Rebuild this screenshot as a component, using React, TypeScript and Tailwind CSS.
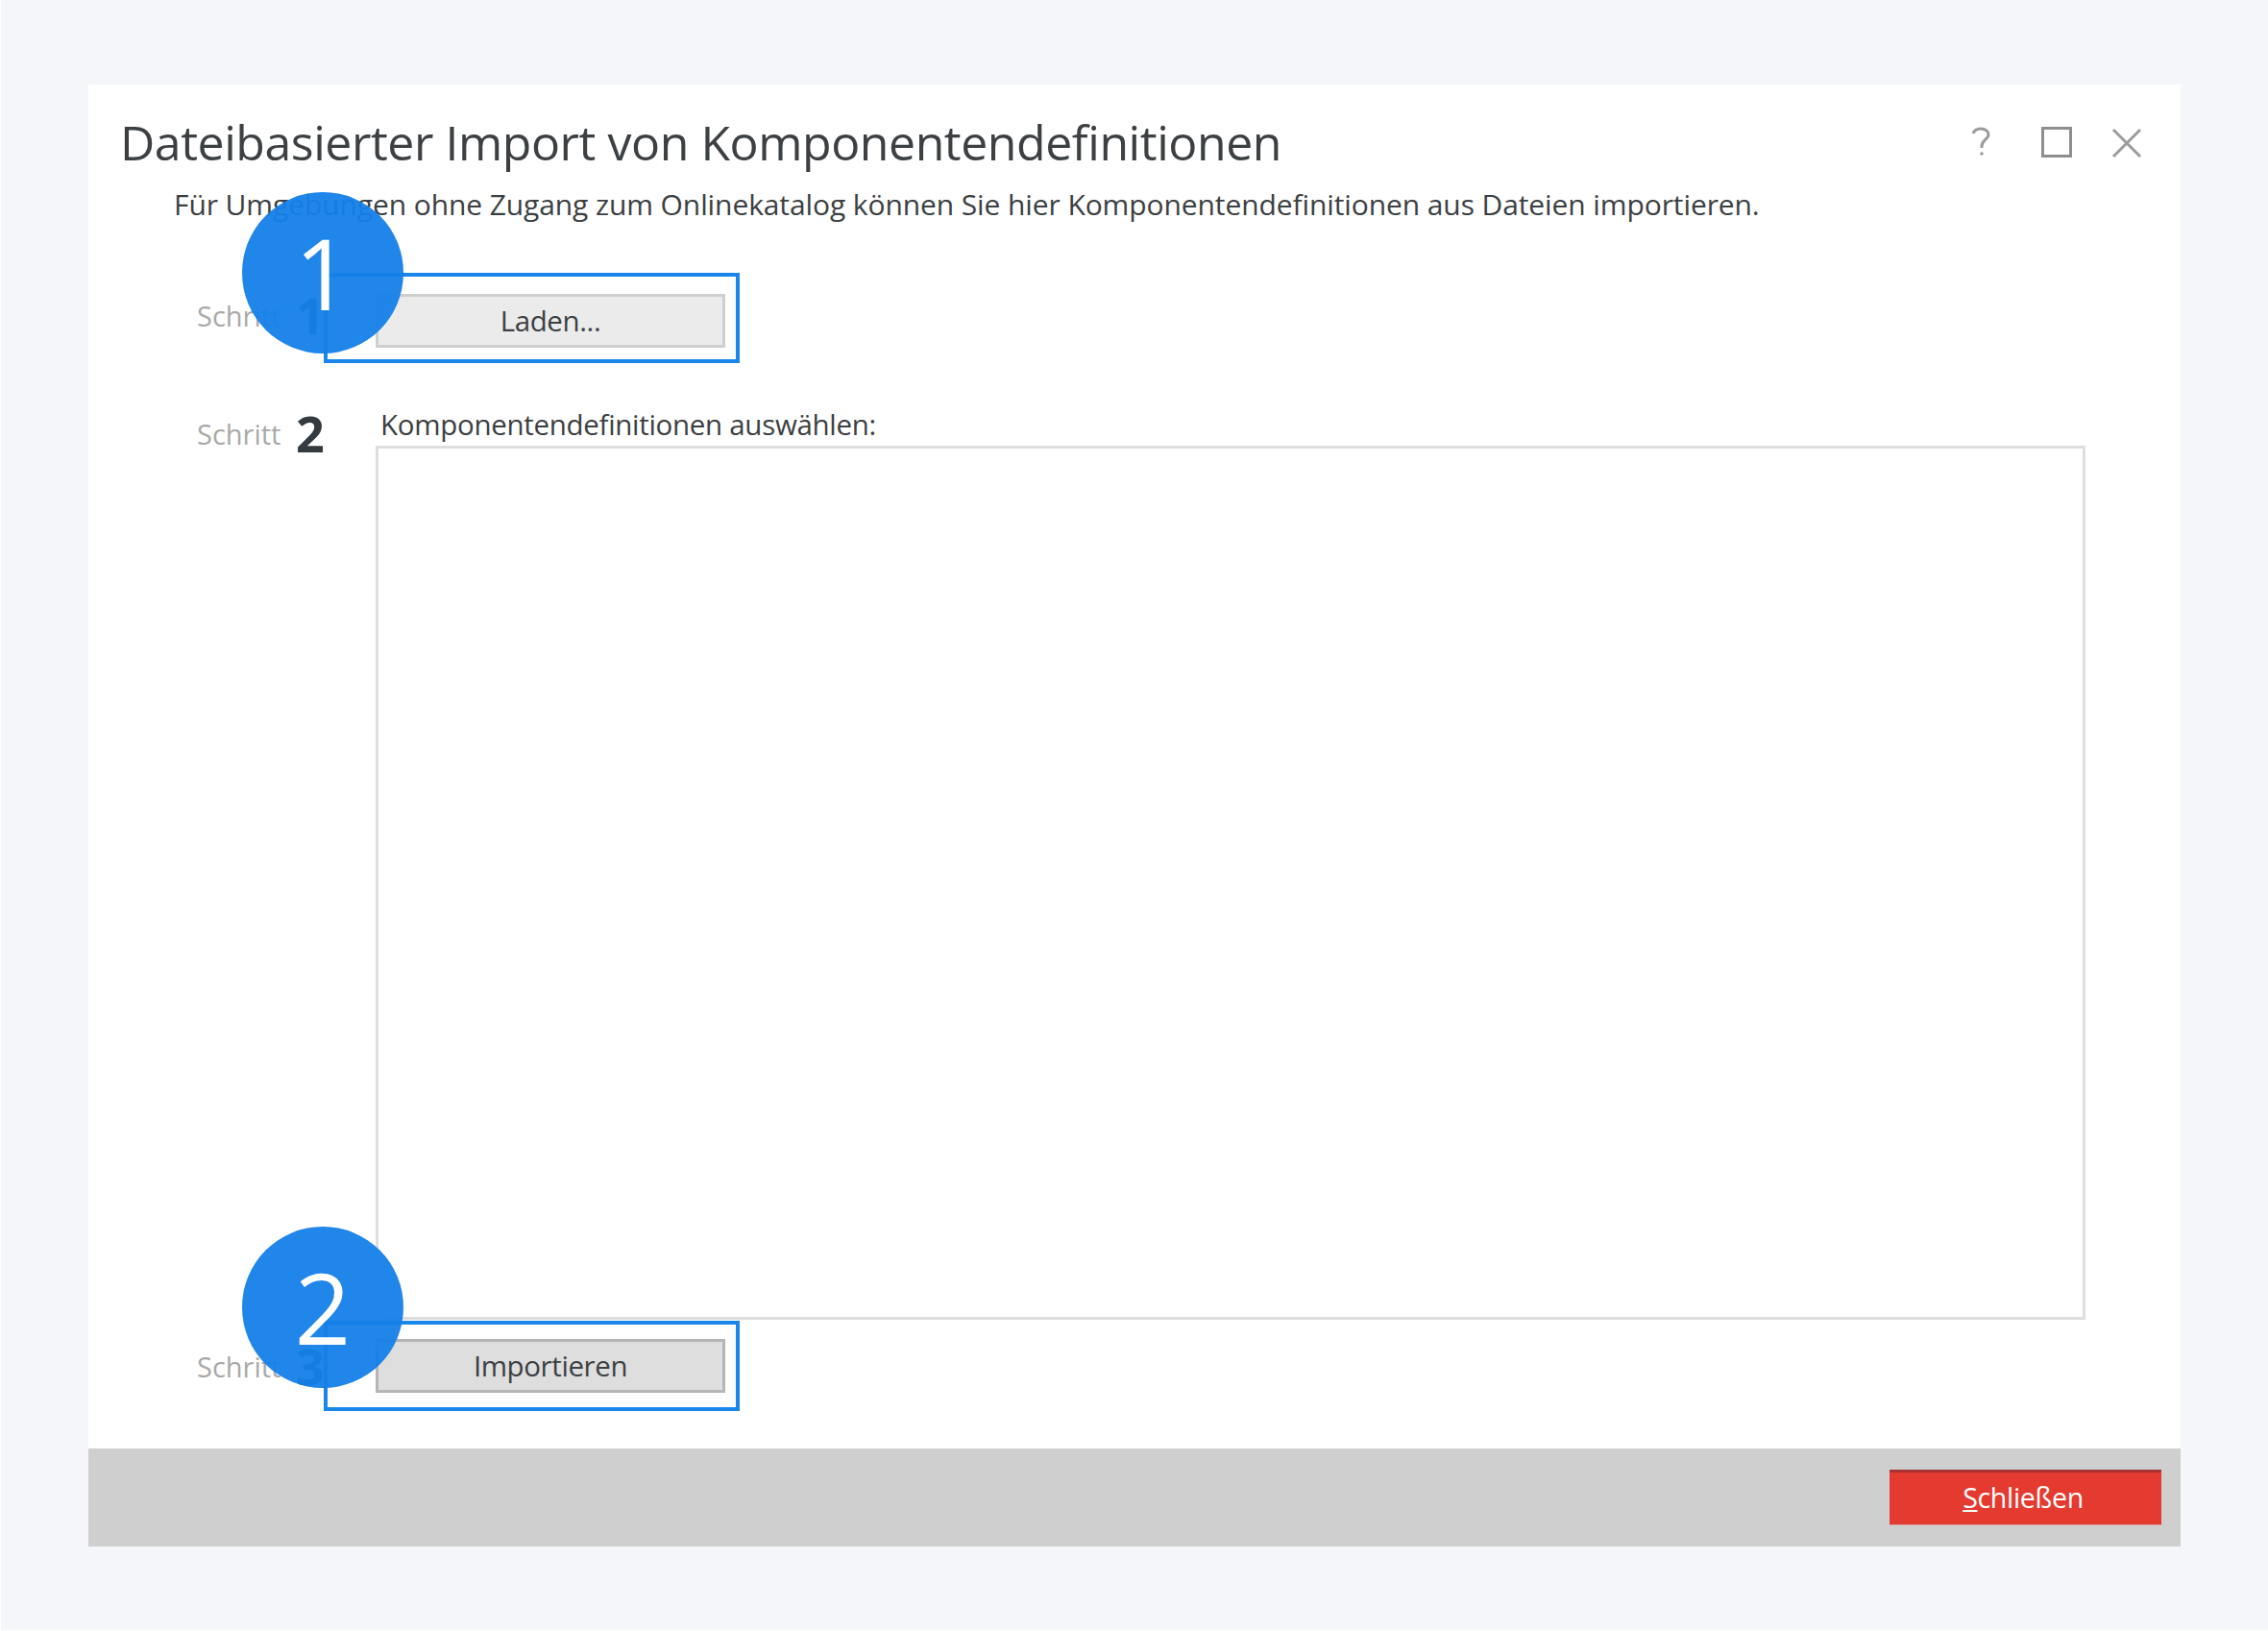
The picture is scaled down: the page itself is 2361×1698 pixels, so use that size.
const FONT = "font-['Open_Sans','Noto_Sans',sans-serif]";

type StepLabelProps = {
  step: number;
  className?: string;
};

// "Schritt n" label in the left column
const StepLabel = ({ step, className = "" }: StepLabelProps) => (
  <div className={`w-[299px] shrink-0 pl-[113px] flex items-center ${className}`}>
    <span className="text-[29px] leading-none text-[#a9a9a9] w-[103px] shrink-0">Schritt</span>
    <span className="text-[52px] leading-none font-bold text-[#333a40]">{step}</span>
  </div>
);

type CalloutProps = {
  n: number;
  frameTop: string;
  circleTop: string;
};

// Blue frame + numbered circle lying over a button
const Callout = ({ n, frameTop, circleTop }: CalloutProps) => (
  <>
    <div className={`absolute left-[-54px] w-[433px] h-[94px] border-4 border-[#1b86ea] pointer-events-none ${frameTop}`} />
    <div className={`absolute left-[-139px] w-[168px] h-[168px] rounded-full bg-[#1480e9]/95 flex items-center justify-center text-white text-[102px] leading-none pointer-events-none ${circleTop}`}>
      {n}
    </div>
  </>
);

export default function App() {
  return (
    <div className={`w-[2361px] h-[1698px] bg-[#f4f6fa] border-l border-b border-white pl-[91px] pt-[88px] overflow-hidden ${FONT}`}>
      <div className="w-[2178px] h-[1522px] bg-white flex flex-col">
        <div className="h-[1420px] relative">
          {/* Header */}
          <div className="h-[88px] pt-[32px] pl-[33px] pr-[40px] flex justify-between items-start">
            <h1 className="text-[50px] leading-[56px] text-[#3c4043] tracking-[-0.45px] font-normal">
              Dateibasierter Import von Komponentendefinitionen
            </h1>
            <div className="flex items-center pt-[11px]">
              <svg width="24" height="32" viewBox="0 0 24 32" fill="none" stroke="#9b9b9b" strokeWidth="3" className="mr-[50px] ml-[2px]">
                <path d="M3 7c1-3 4-5 8-5 5 0 8 3 8 6 0 5-7 6-7 12v2" />
                <circle cx="12" cy="28" r="1.8" fill="#9b9b9b" stroke="none" />
              </svg>
              <div className="w-[32px] h-[32px] border-[3px] border-[#8f8f8f] mr-[41px]" />
              <svg width="32" height="32" viewBox="0 0 32 32" fill="none" stroke="#9b9b9b" strokeWidth="3" className="mt-[2px]">
                <path d="M2 2l28 28M30 2L2 30" />
              </svg>
            </div>
          </div>

          <p className="pl-[89px] text-[30px] leading-[40px] text-[#3c4043] tracking-[-0.1px] mt-[17px]">
            Für Umgebungen ohne Zugang zum Onlinekatalog können Sie hier Komponentendefinitionen aus Dateien importieren.
          </p>

          {/* Step 1 */}
          <div className="flex mt-[73px] h-[56px]">
            <StepLabel step={1} className="pb-[12px]" />
            <div className="relative">
              <button className="w-[364px] h-[56px] bg-[#ebebeb] border-[3px] border-[#cfcfcf] text-[29.5px] leading-none text-[#3c4043] tracking-[-0.4px]">
                Laden...
              </button>
              <Callout n={1} frameTop="top-[-22px]" circleTop="top-[-106px]" />
            </div>
          </div>

          {/* Step 2 */}
          <div className="flex mt-[55px]">
            <div className="pt-[8px]">
              <StepLabel step={2} />
            </div>
            <div>
              <div className="pl-[5px] pt-[5px] h-[47px] text-[29.5px] leading-[40px] text-[#3c4043] tracking-[-0.3px]">
                Komponentendefinitionen auswählen:
              </div>
              <div className="w-[1780px] h-[910px] bg-white border-[3px] border-[#dedede]" />
            </div>
          </div>

          {/* Step 3 */}
          <div className="flex mt-[20px] h-[56px]">
            <StepLabel step={3} />
            <div className="relative">
              <button className="w-[364px] h-[56px] bg-[#dedede] border-[3px] border-[#b5b5b5] text-[29.5px] leading-none text-[#3c4043] tracking-[-0.4px]">
                Importieren
              </button>
              <Callout n={2} frameTop="top-[-19px]" circleTop="top-[-117px]" />
            </div>
          </div>
        </div>

        {/* Footer */}
        <div className="h-[102px] bg-[#cfcfcf] flex justify-end pt-[22px] pr-[20px]">
          <button className="w-[283px] h-[58px] pr-[5px] pb-[2px] bg-[#e53a30] border-t-[3px] border-t-[#a83232] border-b border-b-[#d9a0a0] text-white text-[28.5px] leading-none tracking-[-0.3px]">
            <span className="underline">S</span>chließen
          </button>
        </div>
      </div>
    </div>
  );
}
